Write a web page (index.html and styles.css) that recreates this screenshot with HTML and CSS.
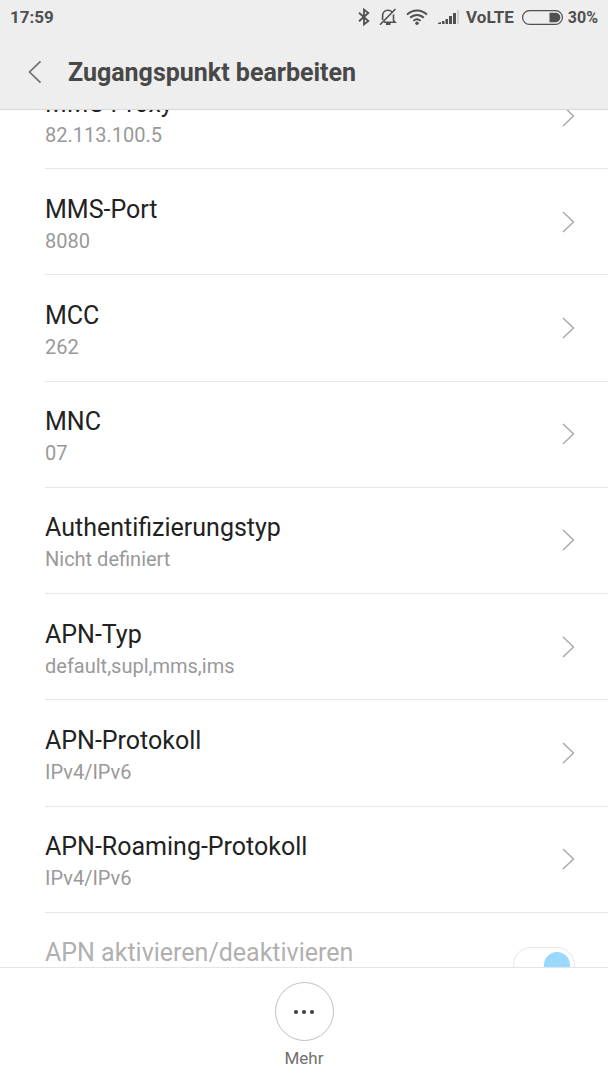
FILE: index.html
```html
<!DOCTYPE html>
<html lang="de">
<head>
<meta charset="utf-8">
<meta name="viewport" content="width=device-width, initial-scale=1">
<title>Zugangspunkt bearbeiten</title>
<link rel="stylesheet" href="styles.css">
</head>
<body>
<header class="top">
  <div class="status">
    <span class="clock">17:59</span>
    <svg class="icon-bt" width="12" height="18" viewBox="0 0 12 18" fill="none" stroke="currentColor" stroke-width="1.8"><path d="M1 4.8 10.3 13 6 16.4V1.6L10.3 5 1 13.2"/></svg>
    <svg class="icon-bell" width="18" height="18" viewBox="0 0 18 18" fill="none" stroke="currentColor" stroke-width="1.6"><path d="M3.600 12V7.500C3.600 4.500 5.800 2.200 9 2.200c1.700 0 3 .6 3.900 1.600M14.500 6.500v6l1.500 1.700H5M1 16.800 16.500 1"/><path d="M7 16h4.500" stroke-width="2"/></svg>
    <svg class="icon-wifi" width="22" height="18" viewBox="0 0 22 18" fill="none" stroke="currentColor" stroke-width="2"><path d="M1 6.600C6.500 1 15.500 1 21 6.600M4.200 9.800c3.900-3.900 9.700-3.900 13.600 0M7.400 12.900c2.200-2.100 5-2.100 7.200 0"/><circle cx="11" cy="15.300" r="1.700" fill="currentColor" stroke="none"/></svg>
    <svg class="icon-signal" width="22" height="16" viewBox="0 0 22 16" fill="currentColor"><path d="M0 15v-1l3-1v2zM4 12h2.500v3H4zM7.500 10H10v5H7.500zM11 7h3v8h-3zM15 4h3v11h-3z"/><path d="M19 1h2v14h-2z" opacity=".2"/></svg>
    <span class="carrier">VoLTE</span>
    <svg class="icon-battery" width="41" height="15" viewBox="0 0 41 15"><rect x=".6" y=".6" width="39.800" height="13.800" rx="6.900" fill="none" stroke="currentColor" stroke-width="1.200"/><path d="M27.500 2.700h6a4.800 4.800 0 0 1 0 9.600h-6z" fill="currentColor"/></svg>
    <span class="percent">30%</span>
  </div>
  <div class="bar">
    <button class="back" aria-label="Zurück"><svg width="14" height="24" viewBox="0 0 14 24" fill="none" stroke="currentColor" stroke-width="1.700"><path d="M12.500 1.300 1.500 12l11 10.700"/></svg></button>
    <h1 class="heading">Zugangspunkt bearbeiten</h1>
  </div>
</header>
<main class="content">
  <div class="list">
    <button class="row"><span class="texts"><span class="name">MMS-Proxy</span><span class="value">82.113.100.5</span></span><svg class="chevron" viewBox="0 0 13 22"><path d="M1 1l10.500 10L1 21"/></svg></button>
    <button class="row"><span class="texts"><span class="name">MMS-Port</span><span class="value">8080</span></span><svg class="chevron" viewBox="0 0 13 22"><path d="M1 1l10.500 10L1 21"/></svg></button>
    <button class="row"><span class="texts"><span class="name">MCC</span><span class="value">262</span></span><svg class="chevron" viewBox="0 0 13 22"><path d="M1 1l10.500 10L1 21"/></svg></button>
    <button class="row"><span class="texts"><span class="name">MNC</span><span class="value">07</span></span><svg class="chevron" viewBox="0 0 13 22"><path d="M1 1l10.500 10L1 21"/></svg></button>
    <button class="row"><span class="texts"><span class="name">Authentifizierungstyp</span><span class="value">Nicht definiert</span></span><svg class="chevron" viewBox="0 0 13 22"><path d="M1 1l10.500 10L1 21"/></svg></button>
    <button class="row"><span class="texts"><span class="name">APN-Typ</span><span class="value">default,supl,mms,ims</span></span><svg class="chevron" viewBox="0 0 13 22"><path d="M1 1l10.500 10L1 21"/></svg></button>
    <button class="row"><span class="texts"><span class="name">APN-Protokoll</span><span class="value">IPv4/IPv6</span></span><svg class="chevron" viewBox="0 0 13 22"><path d="M1 1l10.500 10L1 21"/></svg></button>
    <button class="row"><span class="texts"><span class="name">APN-Roaming-Protokoll</span><span class="value">IPv4/IPv6</span></span><svg class="chevron" viewBox="0 0 13 22"><path d="M1 1l10.500 10L1 21"/></svg></button>
    <label class="row row-off" for="apn-active"><span class="texts"><span class="name">APN aktivieren/deaktivieren</span><span class="value"></span></span><input class="switch" id="apn-active" type="checkbox" checked disabled></label>
  </div>
</main>
<footer class="actions">
  <button class="more"><span class="circle"><svg width="22" height="6" viewBox="0 0 22 6" fill="currentColor"><circle cx="3" cy="3" r="2.100"/><circle cx="11" cy="3" r="2.100"/><circle cx="19" cy="3" r="2.100"/></svg></span><span>Mehr</span></button>
</footer>
</body>
</html>
```
FILE: styles.css
```css
* {
  box-sizing: border-box;
}

body {
  margin: 0;
  height: 100vh;
  display: flex;
  flex-direction: column;
  background: #fff;
  color: #222;
  font-family: Roboto, "Liberation Sans", sans-serif;
}

button {
  border: 0;
  background: none;
  padding: 0;
  color: inherit;
  font: inherit;
}

svg {
  display: block;
  flex: none;
}

.top {
  position: relative;
  z-index: 1;
  background: #eee;
  border-bottom: 1px solid #d8d8d8;
  color: #484848;
}

.status {
  display: flex;
  align-items: center;
  height: 34px;
  padding: 0 10px;
  font-size: 17px;
  font-weight: 700;
  color: #505050;
}

.clock {
  margin-right: auto;
}

.icon-bt,
.icon-bell {
  margin-right: 9px;
}

.icon-wifi {
  margin-right: 10px;
}

.icon-signal {
  margin-right: 6px;
}

.carrier {
  margin-right: 8px;
}

.icon-battery {
  margin-right: 5px;
}

.percent {
  font-size: 16px;
}

.bar {
  display: flex;
  align-items: center;
  gap: 26px;
  height: 75px;
  padding: 0 28px;
}

.back {
  color: #707070;
}

.heading {
  margin: 0;
  padding-top: 2px;
  font-size: 25px;
  line-height: 32px;
  font-weight: 700;
}

.content {
  flex: 1;
  min-height: 0;
  overflow: hidden;
  display: flex;
}

/* The list is scrolled: its first and last rows run under the bars. */
.list {
  flex: 1;
  display: flex;
  flex-direction: column;
  margin: -47px 0 -52px 45px;
}

.row {
  flex: 1 0 auto;
  min-height: 106px;
  display: flex;
  align-items: center;
  justify-content: space-between;
  padding-right: 33px;
  border-bottom: 1px solid #e6e6e6;
  text-align: left;
}

.texts {
  display: flex;
  flex-direction: column;
  padding-top: 4px;
}

.name {
  font-size: 25px;
  line-height: 34px;
}

.value {
  min-height: 28px;
  font-size: 20px;
  line-height: 28px;
  color: #999;
}

.chevron {
  width: 13px;
  height: 22px;
  fill: none;
  stroke: #aaa;
  stroke-width: 1.5;
}

.row-off .name {
  color: #b0b0b0;
}

.switch {
  appearance: none;
  display: flex;
  justify-content: flex-end;
  align-items: center;
  width: 62px;
  height: 36px;
  margin: 0;
  padding: 0 4px;
  border: 1px solid #e6e6e6;
  border-radius: 18px;
}

.switch::before {
  content: "";
  width: 26px;
  height: 26px;
  border-radius: 50%;
  background: #99d9ff;
}

.actions {
  position: relative;
  z-index: 1;
  display: flex;
  justify-content: center;
  padding: 14px 0 10px;
  border-top: 1px solid #e4e4e4;
  background: #fff;
}

.more {
  display: flex;
  flex-direction: column;
  align-items: center;
  gap: 6px;
  font-size: 17px;
  line-height: 23px;
  color: #707070;
}

.circle {
  display: flex;
  align-items: center;
  justify-content: center;
  width: 59px;
  height: 59px;
  border: 1px solid #c0c0c0;
  border-radius: 50%;
  color: #404040;
}
```
